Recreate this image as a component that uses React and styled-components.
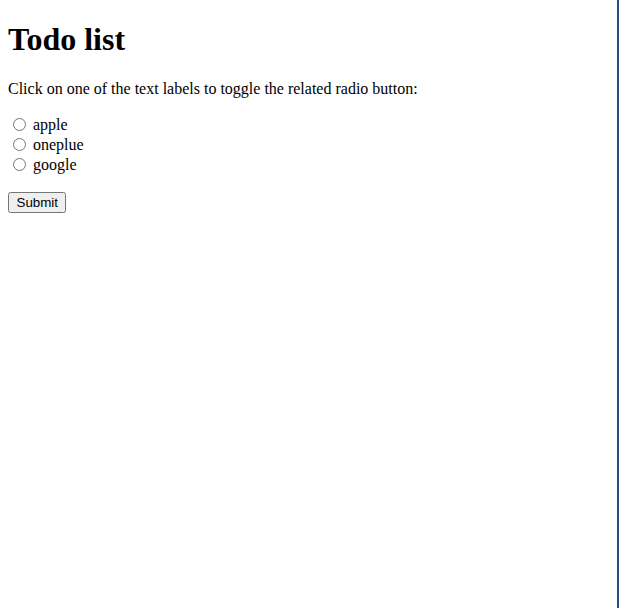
import React from 'react'
import styled, { createGlobalStyle } from 'styled-components'

const GlobalStyle = createGlobalStyle`
html {
  min-height: 100%;
  background: linear-gradient(to left, #2a4b7c 2px, #ffffff 2px);
}
body {
  margin: 0;
  padding: 0 8px 8px;
  font-family: "Liberation Serif", "Times New Roman", serif;
  font-size: 16px;
  color: #000;
}
`

const Title = styled.h1`
font-size: 32px;
font-weight: bold;
margin: 21.44px 0;
`

const Hint = styled.p`
margin: 16px 0;
`

const Form = styled.form`
margin: 0;
padding-top: 1px;
`

const Option = styled.div`
display: flex;
align-items: center;
height: 20px;
`

const Radio = styled.input`
width: 13px;
height: 13px;
margin: 0 7px 0 5px;
`

const SubmitButton = styled.button`
margin-top: 17px;
font-family: "Liberation Sans", Arial, sans-serif;
font-size: 13.33px;
padding: 1px 6.5px;
`

const options = ['apple', 'oneplue', 'google']

const App = () => {
  return (
    <>
      <GlobalStyle />
      <Title>Todo list</Title>
      <Hint>Click on one of the text labels to toggle the related radio button:</Hint>
      <Form onSubmit={e => e.preventDefault()}>
        {options.map(name => (
          <Option key={name}>
            <Radio type="radio" id={name} name="brand" value={name} />
            <label htmlFor={name}>{name}</label>
          </Option>
        ))}
        <SubmitButton type="submit">Submit</SubmitButton>
      </Form>
    </>
  )
}

export default App
